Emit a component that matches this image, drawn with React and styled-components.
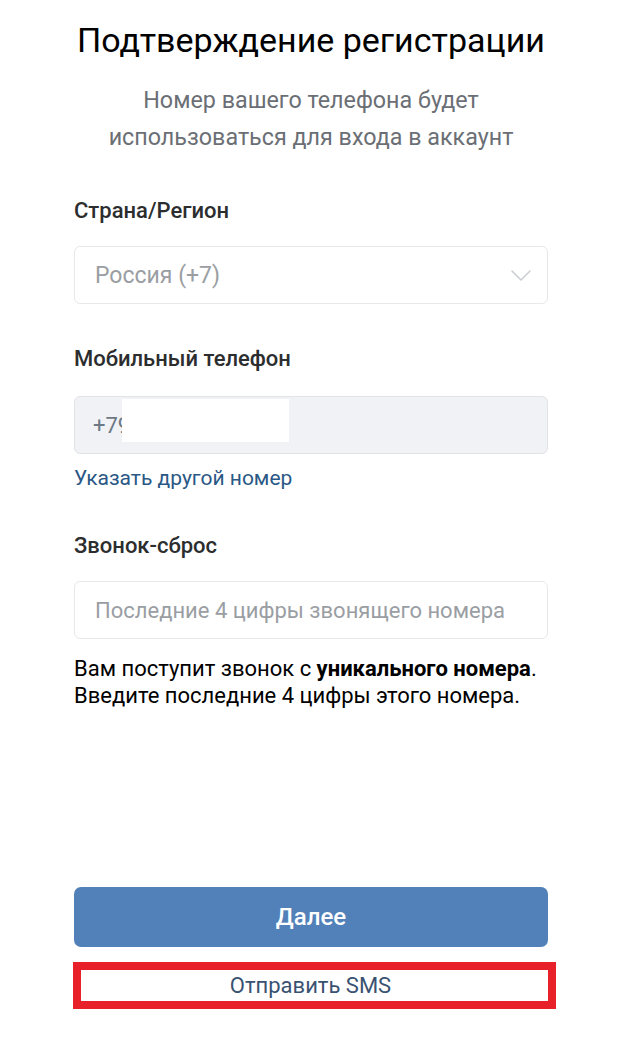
import React from 'react';
import styled, {createGlobalStyle} from 'styled-components';

const GlobalStyle = createGlobalStyle`
    * {
        box-sizing: border-box;
    }
    body {
        margin: 0;
        background: #ffffff;
        font-family: Roboto, "Noto Sans", Arial, sans-serif;
    }
`;

const Chevron = () => (
    <svg width="20" height="11" viewBox="0 0 20 11" fill="none">
        <path d="M1 1l9 9 9-9" stroke="#c9ccd1" strokeWidth="1.5" strokeLinecap="round" strokeLinejoin="round" />
    </svg>
);

const App = () => {
    return (
        <Page>
            <GlobalStyle />
            <Title>Подтверждение регистрации</Title>
            <SubTitle>
                Номер вашего телефона будет
                <br />
                использоваться для входа в аккаунт
            </SubTitle>

            <Label $gap={43}>Страна/Регион</Label>
            <Field>
                <Placeholder $size={23}>Россия (+7)</Placeholder>
                <Chevron />
            </Field>

            <Label $gap={43}>Мобильный телефон</Label>
            <Field $disabled $gap={25}>
                <Value>+79</Value>
                <Redaction />
            </Field>
            <Link>Указать другой номер</Link>

            <Label>Звонок-сброс</Label>
            <Field>
                <Placeholder>Последние 4 цифры звонящего номера</Placeholder>
            </Field>
            <Hint>
                Вам поступит звонок с <b>уникального номера</b>.
                <br />
                Введите последние 4 цифры этого номера.
            </Hint>

            <Footer>
                <PrimaryButton>Далее</PrimaryButton>
                <Highlight>
                    <TextButton>Отправить SMS</TextButton>
                </Highlight>
            </Footer>
        </Page>
    );
};

export default App;

const Page = styled.div`
    display: flex;
    flex-direction: column;
    width: 624px;
    min-height: 1040px;
    padding: 20px 76px 31px 74px;
`;

const Title = styled.h1`
    margin: 0;
    font-size: 34px;
    font-weight: 400;
    line-height: 40px;
    text-align: center;
    color: #000000;
`;

const SubTitle = styled.p`
    margin: 22px 0 0;
    font-size: 23.3px;
    line-height: 37px;
    text-align: center;
    color: #6b6f75;
`;

const Label = styled.div`
    margin: ${p => p.$gap || 44}px 0 0;
    font-size: 22px;
    font-weight: 500;
    line-height: 24px;
    color: #2c2d2e;
`;

const Field = styled.div`
    position: relative;
    display: flex;
    align-items: center;
    justify-content: space-between;
    height: 58px;
    margin-top: ${p => p.$gap || 23}px;
    padding: 0 16px 0 20px;
    border: 1px solid ${p => (p.$disabled ? '#e1e3e6' : '#e7e8ec')};
    border-radius: 6px;
    background: ${p => (p.$disabled ? '#f0f2f5' : '#ffffff')};
`;

const Placeholder = styled.span`
    font-size: ${p => p.$size || 22}px;
    color: #9a9ea3;
`;

const Value = styled.span`
    margin-left: -2px;
    font-size: 22px;
    color: #6d7885;
`;

const Redaction = styled.div`
    position: absolute;
    left: 47px;
    top: 2px;
    width: 167px;
    height: 43px;
    background: #ffffff;
`;

const Link = styled.a`
    margin-top: 12px;
    font-size: 21px;
    line-height: 24px;
    color: #2a5885;
    cursor: pointer;
`;

const Hint = styled.p`
    margin: 16px 0 0;
    font-size: 22px;
    line-height: 27px;
    color: #000000;

    b {
        font-weight: 700;
    }
`;

const Footer = styled.div`
    display: flex;
    flex-direction: column;
    margin-top: auto;
`;

const PrimaryButton = styled.button`
    height: 60px;
    border: none;
    border-radius: 7px;
    background: #5181b8;
    font-family: inherit;
    font-size: 24px;
    font-weight: 500;
    color: #ffffff;
    cursor: pointer;
`;

const Highlight = styled.div`
    margin: 15px -8px 0 -1px;
    border: 8px solid #e8202a;
`;

const TextButton = styled.div`
    height: 31px;
    padding-right: 8px;
    font-size: 22px;
    line-height: 31px;
    text-align: center;
    color: #3a5272;
    cursor: pointer;
`;
